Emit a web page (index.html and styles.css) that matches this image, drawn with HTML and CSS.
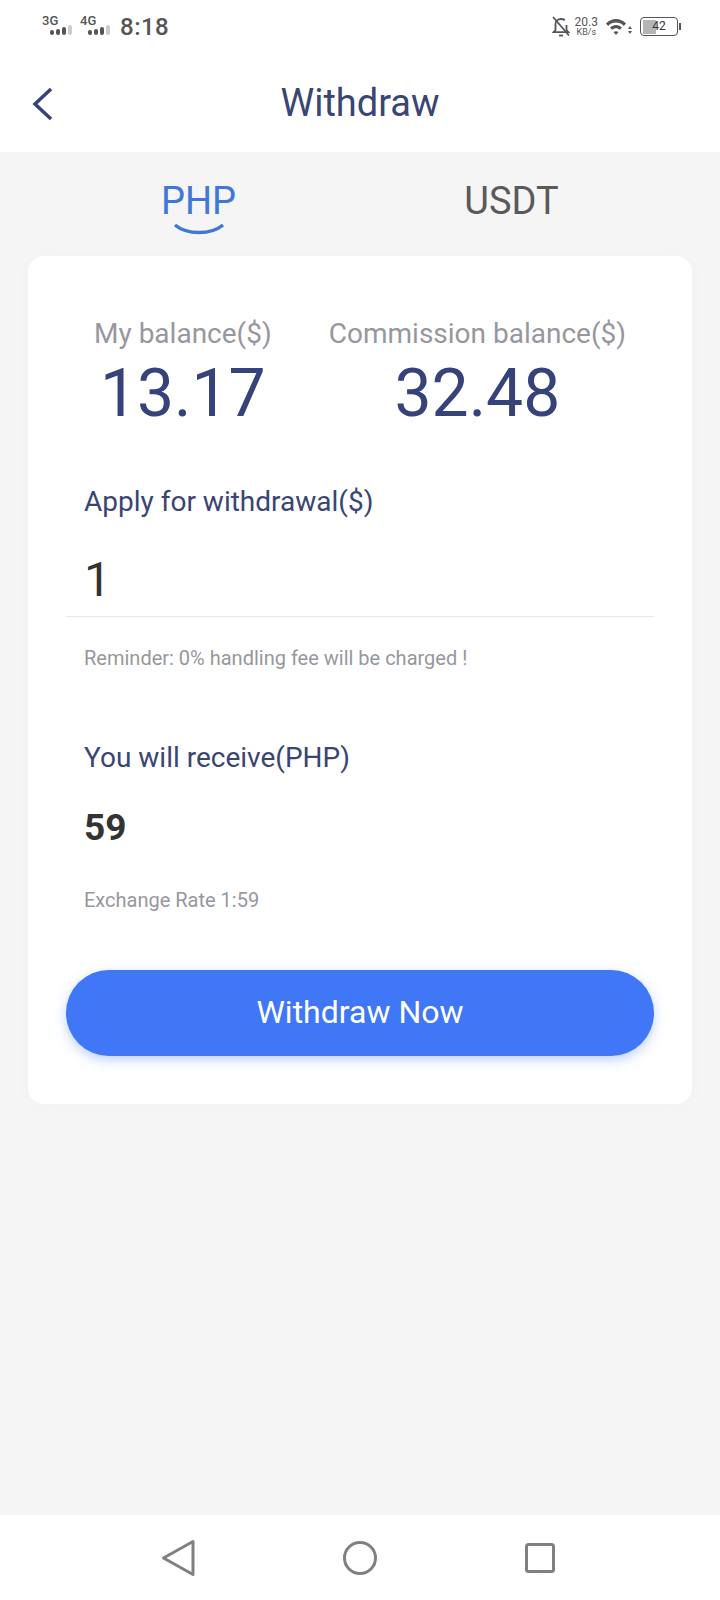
FILE: index.html
```html
<!DOCTYPE html>
<html lang="en">
<head>
<meta charset="UTF-8" />
<meta name="viewport" content="width=device-width, initial-scale=1" />
<title>Withdraw</title>
<link rel="stylesheet" href="styles.css">
</head>
<body>

<div class="status-bar">
  <div class="status-left">
    <div class="signal">
      <span class="signal-name">3G</span>
      <svg class="signal-bars" width="24" height="10" viewBox="0 0 24 10"><rect x="0" y="5" width="4" height="5" rx="2" fill="#555"/><rect x="6" y="4" width="4" height="6" rx="2" fill="#555"/><rect x="12" y="2" width="4" height="8" rx="2" fill="#555"/><rect x="18" y="0" width="4" height="10" rx="2" fill="#ccc"/></svg>
    </div>
    <div class="signal">
      <span class="signal-name">4G</span>
      <svg class="signal-bars" width="24" height="10" viewBox="0 0 24 10"><rect x="0" y="5" width="4" height="5" rx="2" fill="#555"/><rect x="6" y="4" width="4" height="6" rx="2" fill="#555"/><rect x="12" y="2" width="4" height="8" rx="2" fill="#555"/><rect x="18" y="0" width="4" height="10" rx="2" fill="#ccc"/></svg>
    </div>
    <span class="clock">8:18</span>
  </div>
  <div class="status-right">
    <svg class="bell" width="18" height="21" viewBox="0 0 18 21" fill="none" stroke="#555" stroke-width="1.800"><path d="M3.500 11V8C3.500 5 5.800 3 9 3c1.500 0 2.800.5 3.800 1.300M14.500 9v5l2 2.200H1.500L3.500 14v-3"/><path d="M7 19.500h4"/><path d="M1 1l16 18.500"/></svg>
    <div class="speed"><span class="speed-num">20.3</span><span class="speed-unit">KB/s</span></div>
    <svg width="26" height="18" viewBox="0 0 26 18"><path d="M0 5.500C5.500-.5 14.500-.5 20 5.500l-2.200 2.400C13.500 3.500 6.500 3.500 2.200 7.900z" fill="#555"/><path d="M4 9.500c3.500-3.500 8.500-3.500 12 0l-2.200 2.300c-2.300-2.200-5.300-2.200-7.600 0z" fill="#555"/><path d="M10 17l-2.500-3c1.500-1.100 3.500-1.100 5 0z" fill="#555"/><path d="M24 8l-2 3h4zM24 16l-2-3h4z" fill="#555"/></svg>
    <div class="battery">
      <div class="battery-body"><div class="battery-fill"></div><span class="battery-num">42</span></div>
      <div class="battery-cap"></div>
    </div>
  </div>
</div>

<div class="header">
  <svg class="back" width="24" height="34" viewBox="0 0 24 34" fill="none" stroke="#36427a" stroke-width="3.500"><path d="M20 2L4 17l16 15"/></svg>
  <h1 class="title">Withdraw</h1>
</div>

<div class="main">
  <div class="tabs">
    <div class="tab tab-active">
      PHP
      <svg class="tab-smile" width="52" height="14" viewBox="0 0 52 14" fill="none" stroke="#3f78d8" stroke-width="3.500"><path d="M2 2c12 10 36 10 48 0"/></svg>
    </div>
    <div class="tab">USDT</div>
  </div>

  <div class="card">
    <div class="balances">
      <div class="balance">
        <div class="balance-label">My balance($)</div>
        <div class="balance-num">13.17</div>
      </div>
      <div class="balance">
        <div class="balance-label">Commission balance($)</div>
        <div class="balance-num">32.48</div>
      </div>
    </div>

    <div class="field-label apply-label">Apply for withdrawal($)</div>
    <div class="amount-input">1</div>
    <div class="hint">Reminder: 0% handling fee will be charged !</div>

    <div class="field-label receive-label">You will receive(PHP)</div>
    <div class="receive-num">59</div>
    <div class="hint rate">Exchange Rate 1:59</div>

    <button class="withdraw-btn">Withdraw Now</button>
  </div>
</div>

<div class="nav-bar">
  <svg width="34" height="38" viewBox="0 0 34 38" fill="none" stroke="#808080" stroke-width="3" stroke-linejoin="round"><path d="M32 2.500V35.500L2.500 19z"/></svg>
  <svg width="34" height="34" viewBox="0 0 34 34" fill="none" stroke="#808080" stroke-width="3"><circle cx="17" cy="17" r="15.500"/></svg>
  <svg width="30" height="30" viewBox="0 0 30 30" fill="none" stroke="#808080" stroke-width="3"><rect x="1.500" y="1.500" width="27" height="27" rx="2"/></svg>
</div>

</body>
</html>
```

FILE: styles.css
```css
* {
  box-sizing: border-box;
}
body {
  margin: 0;
  height: 1600px;
  display: flex;
  flex-direction: column;
  background: #f5f5f6;
  font-family: Roboto, "Noto Sans", sans-serif;
}

/* status bar */
.status-bar {
  height: 54px;
  background: #fff;
  padding: 14px 40px 0 42px;
  display: flex;
  justify-content: space-between;
  align-items: flex-start;
  color: #555;
}
.status-left {
  display: flex;
  align-items: center;
  gap: 6px;
}
.signal {
  width: 32px;
  height: 24px;
  display: flex;
  flex-direction: column;
  font-size: 13px;
  font-weight: 500;
  line-height: 12px;
}
.signal-bars {
  margin: -2px 0 0 8px;
}
.clock {
  font-size: 24px;
  font-weight: 500;
  line-height: 26px;
  margin-left: 2px;
  letter-spacing: 0.5px;
}
.status-right {
  display: flex;
  align-items: center;
  gap: 8px;
  margin-top: 2px;
  margin-right: -1px;
}
.bell {
  margin-right: -3px;
}
.speed {
  display: flex;
  flex-direction: column;
  align-items: center;
}
.speed-num {
  font-size: 12px;
  line-height: 12px;
}
.speed-unit {
  font-size: 9px;
  line-height: 9px;
}
.battery {
  display: flex;
  align-items: center;
}
.battery-body {
  width: 38px;
  height: 19px;
  border: 1.500px solid #555;
  border-radius: 4px;
  padding: 1.500px;
  position: relative;
}
.battery-fill {
  width: 42%;
  height: 100%;
  background: #b5b5b5;
}
.battery-num {
  position: absolute;
  top: 0;
  left: 0;
  right: 0;
  text-align: center;
  font-size: 12px;
  line-height: 16px;
  color: #333;
}
.battery-cap {
  width: 2px;
  height: 7px;
  background: #555;
  margin-left: 1px;
}

/* header */
.header {
  height: 98px;
  background: #fff;
  display: flex;
  align-items: center;
  justify-content: center;
  position: relative;
}
.back {
  position: absolute;
  left: 31px;
  top: 33px;
}
.title {
  margin: 0;
  font-size: 38px;
  font-weight: 400;
  color: #3a4573;
}

/* tabs */
.main {
  flex: 1;
  padding: 0 28px;
}
.tabs {
  height: 104px;
  display: flex;
  padding: 25px 24px 0 14px;
}
.tab {
  flex: 1;
  text-align: center;
  font-size: 38px;
  line-height: 48px;
  color: #5a5a5a;
  position: relative;
}
.tab-active {
  color: #3f78d8;
}
.tab-smile {
  position: absolute;
  left: 50%;
  top: 46px;
  transform: translateX(-50%);
}

/* card */
.card {
  height: 848px;
  background: #fff;
  border-radius: 16px;
  padding: 61px 38px 0;
  box-shadow: 0 2px 20px rgba(0, 0, 0, 0.02);
}
.balances {
  display: flex;
  justify-content: space-between;
  padding: 0 28px 0 28px;
}
.balance {
  text-align: center;
}
.balance-label {
  font-size: 28px;
  line-height: 34px;
  color: #97979e;
}
.balance-num {
  font-size: 66px;
  line-height: 80px;
  margin-top: 3px;
  color: #36427a;
}
.field-label {
  font-size: 28px;
  line-height: 36px;
  color: #3a4573;
  padding-left: 18px;
}
.apply-label {
  margin-top: 50px;
}
.amount-input {
  height: 97px;
  padding: 32px 0 0 18px;
  font-size: 48px;
  line-height: 56px;
  color: #333;
  border-bottom: 1px solid #e8e8ea;
}
.hint {
  font-size: 20px;
  line-height: 26px;
  color: #97979e;
  padding-left: 18px;
  margin-top: 28px;
}
.receive-label {
  margin-top: 69px;
}
.receive-num {
  font-size: 37px;
  font-weight: 700;
  line-height: 48px;
  color: #333;
  padding-left: 18px;
  margin-top: 28px;
}
.rate {
  margin-top: 35px;
}
.withdraw-btn {
  display: block;
  width: 100%;
  height: 86px;
  margin-top: 57px;
  padding: 0 0 2px;
  border: none;
  border-radius: 43px;
  background: #4077f6;
  color: #fff;
  font-family: inherit;
  font-size: 32px;
  box-shadow: 0 4px 12px rgba(64, 119, 246, 0.35);
}

/* bottom nav */
.nav-bar {
  height: 85px;
  background: #fff;
  display: flex;
  align-items: center;
  justify-content: center;
  gap: 148px;
  padding-right: 4px;
}
```
